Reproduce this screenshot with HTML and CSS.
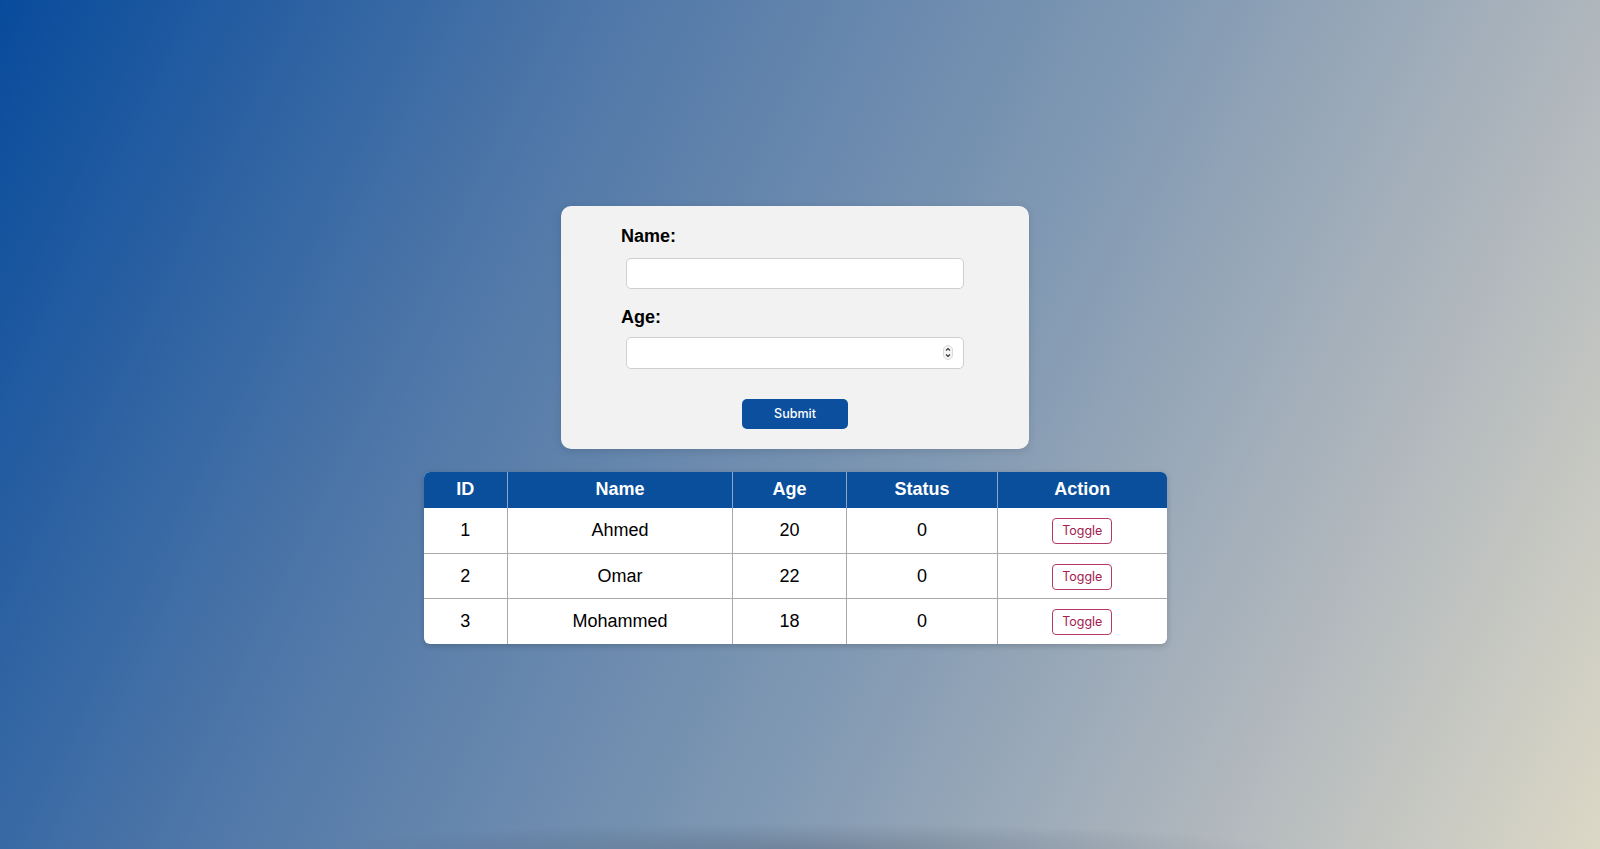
FILE: index.html
```html
<!DOCTYPE html>
<html>
<head>
<meta charset="utf-8">
<link rel="stylesheet" href="styles.css">
</head>
<body>
<main class="page">
  <form class="card">
    <label class="label" for="name">Name:</label>
    <input class="field" id="name" type="text">
    <label class="label label-age" for="age">Age:</label>
    <div class="field-wrap">
      <input class="field field-num" id="age" type="text">
      <svg class="stepper" width="10" height="15" viewBox="0 0 10 15">
        <rect x="0.5" y="0.5" width="9" height="14" rx="4.5" fill="#f4f4f4" stroke="#d8d8d8"/>
        <path d="M3 5.5 L5 3.5 L7 5.5" fill="none" stroke="#333" stroke-width="1.1"/>
        <path d="M3 9.5 L5 11.5 L7 9.5" fill="none" stroke="#333" stroke-width="1.1"/>
      </svg>
    </div>
    <div class="actions"><button type="button" class="submit">Submit</button></div>
  </form>
  <div class="table-wrap">
    <table class="data">
      <colgroup>
        <col class="c-id"><col class="c-name"><col class="c-age"><col class="c-status"><col class="c-action">
      </colgroup>
      <thead>
        <tr><th>ID</th><th>Name</th><th>Age</th><th>Status</th><th>Action</th></tr>
      </thead>
      <tbody>
        <tr class="r1"><td>1</td><td>Ahmed</td><td>20</td><td>0</td><td><button type="button" class="toggle">Toggle</button></td></tr>
        <tr><td>2</td><td>Omar</td><td>22</td><td>0</td><td><button type="button" class="toggle">Toggle</button></td></tr>
        <tr><td>3</td><td>Mohammed</td><td>18</td><td>0</td><td><button type="button" class="toggle">Toggle</button></td></tr>
      </tbody>
    </table>
  </div>
</main>
</body>
</html>
```
FILE: styles.css
```css
* { box-sizing: border-box; }
html, body { margin: 0; height: 100%; }
body {
  background:
    radial-gradient(ellipse 480px 26px at 50% 100%, rgba(40,50,70,0.22), rgba(40,50,70,0) 100%),
    linear-gradient(116deg, #084b9c 0%, #4f77a8 30%, #8199b3 58%, #b0b7bd 80%, #dcd8c6 100%);
  font-family: "Liberation Sans", Arial, sans-serif;
  overflow: hidden;
}
.page {
  height: 100%;
  display: flex;
  flex-direction: column;
  align-items: center;
  justify-content: center;
  padding-right: 10px;
  gap: 23px;
}
.card {
  width: 468px;
  background: #f2f2f2;
  border-radius: 10px;
  padding: 20px 60px 20px 60px;
  box-shadow: 0 2px 8px rgba(0,0,0,0.12);
}
.label {
  display: block;
  font-weight: bold;
  font-size: 18px;
  color: #000;
}
.label-age { margin-top: 18px; }
.field {
  display: block;
  width: 338px;
  height: 31px;
  margin: 11px 0 0 5px;
  border: 1px solid #cfcfcf;
  border-radius: 5px;
  background: #fff;
  font-size: 14px;
  outline: none;
}
.field-wrap { position: relative; width: 343px; padding-top: 9px; }
.field-num { margin-top: 0; height: 32px; }
.stepper { position: absolute; right: 11px; top: 17px; }
.actions { display: flex; justify-content: center; margin-top: 30px; }
.submit {
  width: 106px;
  height: 30px;
  background: #0b4f9e;
  color: #fff;
  border: none;
  border-radius: 5px;
  font-family: Inter, "Liberation Sans", sans-serif;
  font-size: 12.5px;
  font-weight: 500;
}
.table-wrap {
  border-radius: 6px;
  overflow: hidden;
  box-shadow: 0 2px 6px rgba(0,0,0,0.18);
  background: #fff;
}
.data {
  width: 743px;
  border-collapse: collapse;
  table-layout: fixed;
}
.c-id { width: 84px; }
.c-name { width: 225px; }
.c-age { width: 114px; }
.c-status { width: 151px; }
.c-action { width: 169px; }
.data th {
  background: #0a4f9c;
  color: #fff;
  font-weight: bold;
  font-size: 18px;
  height: 36px;
  padding: 0;
  text-align: center;
  border-left: 1px solid #8ea4c4;
}
.data th:first-child, .data td:first-child { border-left: none; }
.data td {
  height: 45px;
  padding: 1px 0 0;
  text-align: center;
  font-size: 18px;
  color: #000;
  border-top: 1px solid #a9a9a9;
  border-left: 1px solid #a9a9a9;
}
.data tr.r1 td { height: 46px; border-top: none; }
.toggle {
  width: 60px;
  height: 26px;
  background: #fff;
  border: 1.5px solid #b5386a;
  border-radius: 4px;
  color: #a3204f;
  font-family: Inter, "Liberation Sans", sans-serif;
  font-size: 12.5px;
  padding: 0;
}
```
